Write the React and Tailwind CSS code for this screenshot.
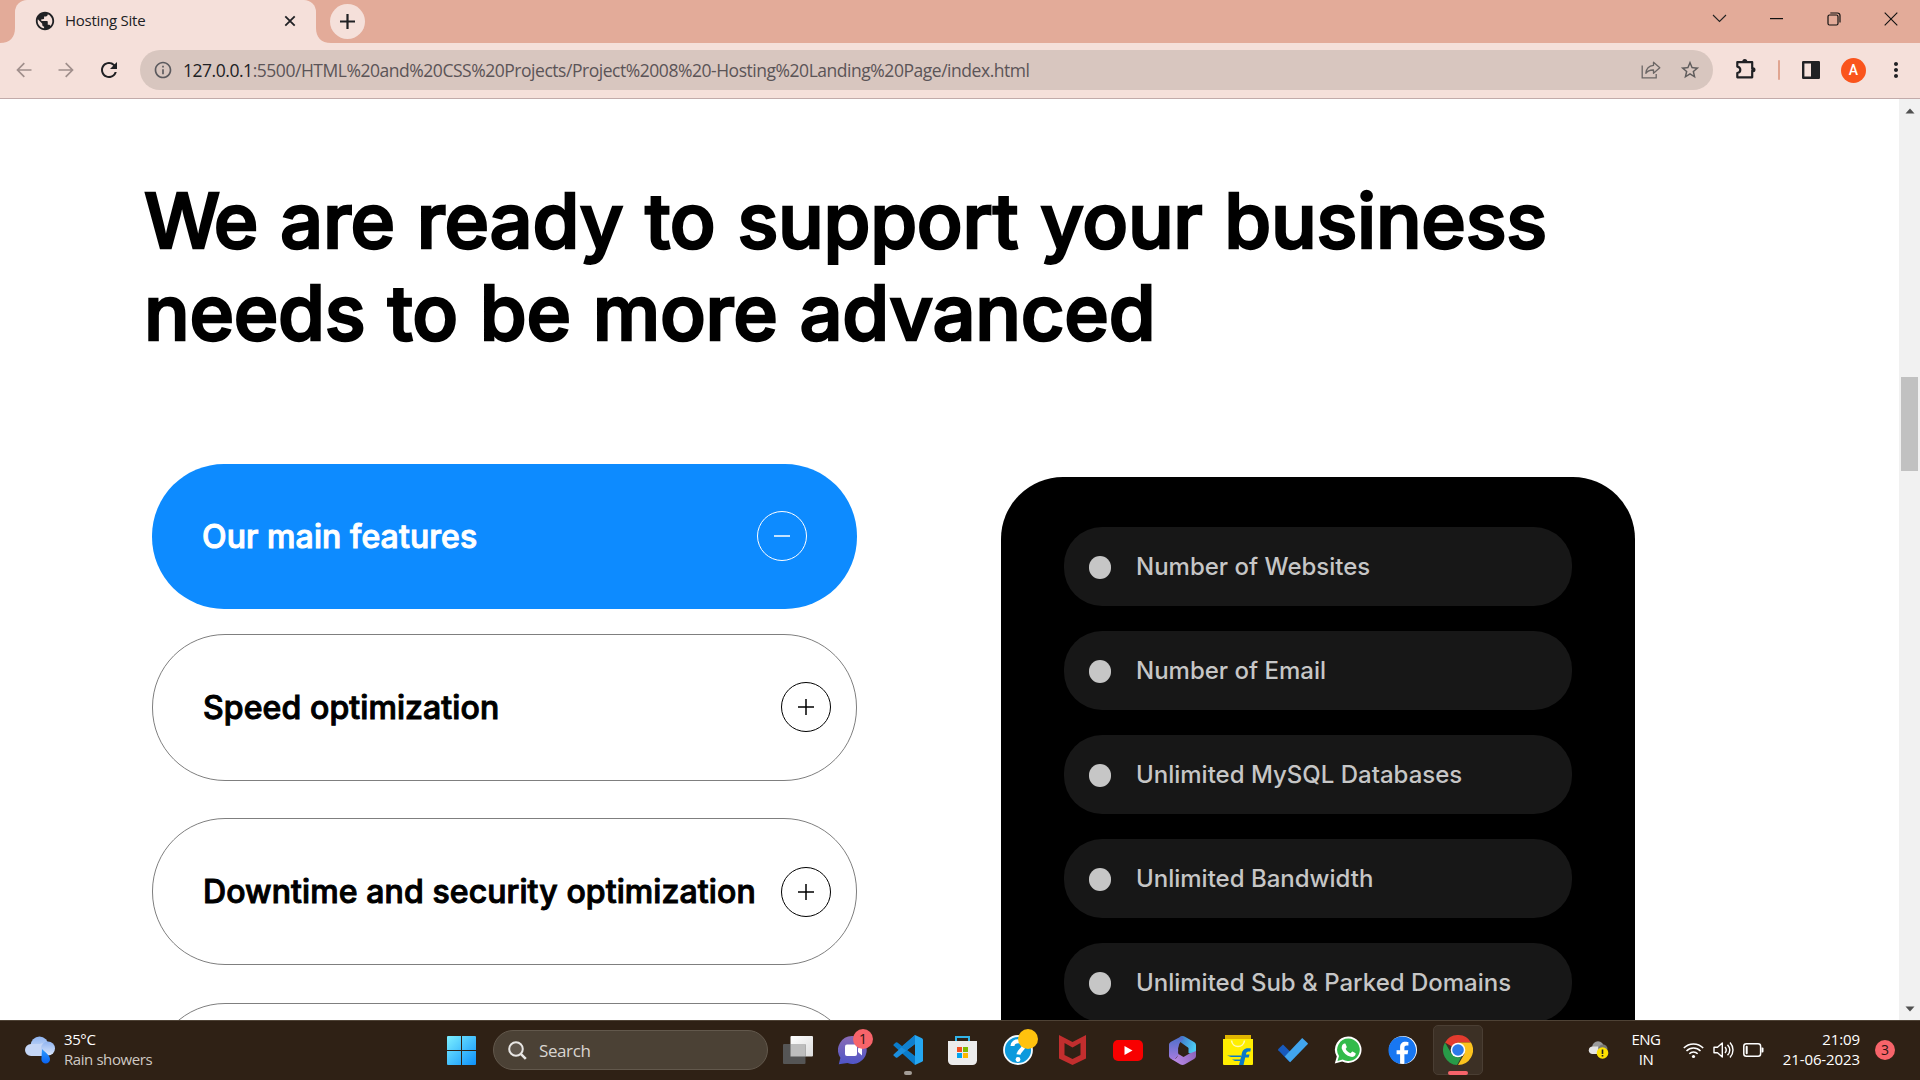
import { MdPublic, MdRefresh, MdInfoOutline, MdStarBorder, MdMoreVert } from "react-icons/md";
import { FaFacebook } from "react-icons/fa";

const ui = "font-['Open_Sans','Noto_Sans',sans-serif]";

function TabStrip() {
  return (
    <div className="flex h-[43px] items-stretch bg-[#e3ab99] pl-[15px]">
      <div className="relative flex w-[301px] items-center rounded-t-[12px] bg-[#f5e0da] pl-[19px] pr-[18px] pb-[1px]">
        <svg className="absolute -left-[15px] bottom-0" width="15" height="15"><path d="M15 0v15H0C10 15 15 9 15 0z" fill="#f5e0da" /></svg>
        <svg className="absolute -right-[15px] bottom-0" width="15" height="15"><path d="M0 0v15h15C5 15 0 9 0 0z" fill="#f5e0da" /></svg>
        <MdPublic className="size-[22px] text-[#202124]" />
        <span className="mb-[2px] ml-[9px] flex-1 text-[15px] leading-5 tracking-[-0.25px] text-[#202124]">Hosting Site</span>
        <svg width="14" height="14" viewBox="0 0 14 14" className="mr-[1px]" fill="none" stroke="#202124" strokeWidth="1.8"><path d="M2.3 2.3l9.4 9.4M11.7 2.3l-9.4 9.4" /></svg>
      </div>
      <div className="ml-[14px] mt-[4px] flex size-[35px] items-center justify-center rounded-full bg-[#f5e0da]">
        <svg width="15" height="15" viewBox="0 0 15 15" stroke="#202124" strokeWidth="2.2"><path d="M7.5 0v15M0 7.5h15" /></svg>
      </div>
      <div className="ml-auto flex pb-[6px]">
        <span className="flex w-[57px] items-center justify-center"><svg width="15" height="9" viewBox="0 0 15 9" fill="none" stroke="#222" strokeWidth="1.1"><path d="M1 1l6.500 6.500L14 1" /></svg></span>
        <span className="flex w-[57px] items-center justify-center"><svg width="13" height="2"><rect width="13" height="1.200" fill="#111" /></svg></span>
        <span className="flex w-[57px] items-center justify-center"><svg width="14" height="14" viewBox="0 0 14 14" fill="none" stroke="#111" strokeWidth="1.2"><rect x="1" y="3" width="10" height="10" rx="1.500" /><path d="M3.300 1h7.200a2.500 2.500 0 0 1 2.500 2.500v7" /></svg></span>
        <span className="flex w-[58px] items-center justify-center"><svg width="14" height="14" viewBox="0 0 14 14" stroke="#111" strokeWidth="1.1"><path d="M.7.7l12.600 12.600M13.300.7L.7 13.300" /></svg></span>
      </div>
    </div>
  );
}

function Toolbar() {
  return (
    <div className="flex h-[56px] items-center border-b border-[#c2abaa] bg-[#f5e0da] pb-[1px]">
      <div className="flex w-[140px] items-center pl-[16px]">
        <svg width="16" height="16" viewBox="0 0 16 16" fill="none" stroke="#a08f8c" strokeWidth="1.700"><path d="M15.500 8H1.500M8.300 1.200L1.500 8l6.800 6.800" /></svg>
        <svg className="ml-[26px]" width="16" height="16" viewBox="0 0 16 16" fill="none" stroke="#a08f8c" strokeWidth="1.700"><path d="M.5 8h14M7.700 1.200L14.500 8l-6.800 6.800" /></svg>
        <MdRefresh className="ml-[23px] size-[24px] text-[#202124]" />
      </div>
      <div className="flex h-[40px] w-[1573px] items-center rounded-full bg-[#d8c6bf] pl-[13px] pr-[12px]">
        <MdInfoOutline className="size-[20px] text-[#5b5a5e]" />
        <span className="mb-[1px] ml-[10px] flex-1 whitespace-nowrap text-[17.500px] leading-6 tracking-[-0.465px] text-[#5b5457]"><span className="text-[#202124]">127.0.0.1</span>:5500/HTML%20and%20CSS%20Projects/Project%2008%20-Hosting%20Landing%20Page/index.html</span>
        <svg width="20" height="18" viewBox="0 0 20 18" fill="none" stroke="#6b6665" strokeWidth="1.300"><path d="M1.200 4.500v12.300h14V13" /><path d="M12.500 1.200L18.800 6.800l-6.300 5.500V9C9 8.900 6.500 9.800 4.800 12.300 5.200 8 7.500 4.900 12.500 4.400z" strokeLinejoin="round" /></svg>
        <MdStarBorder className="ml-[18px] size-[22px] text-[#5f5c5c]" />
      </div>
      <svg className="ml-[23px] mb-[2px]" width="22" height="22" viewBox="0 0 22 22"><path d="M1.300 4.200h14.900v6.800h.8v1.500h-.8v6.800H1.300V15c1.900-.300 3-1.600 3-3.200s-1.100-2.900-3-3.200z" fill="none" stroke="#202124" strokeWidth="2.200" strokeLinejoin="round" /><path d="M6.300 3.500a2.500 2.500 0 0 1 5 0zM17 9.300a2.500 2.500 0 0 1 0 5z" fill="#202124" /></svg>
      <span className="ml-[20px] h-[20px] w-[2px] rounded-full bg-[#e0a591]" />
      <svg className="ml-[22px]" width="18" height="18" viewBox="0 0 18 18"><path d="M1.200 1.200h15.600v15.600H1.200z" fill="none" stroke="#202124" strokeWidth="2.400" strokeLinejoin="round" /><path d="M9 1h8v16H9z" fill="#202124" /></svg>
      <span className="ml-[21px] flex size-[25px] items-center justify-center rounded-full bg-[#fa541c] font-[Roboto,sans-serif] text-[14px] font-medium text-white">A</span>
      <MdMoreVert className="ml-[18px] size-[24px] text-[#202124]" />
    </div>
  );
}

function Sign({ plus }) {
  return (
    <span className="mb-[1px] flex size-[50px] shrink-0 items-center justify-center rounded-full border border-current">
      <svg width="18" height="18" viewBox="0 0 18 18" stroke="currentColor" strokeWidth="1.500"><path d={plus ? "M1 9h16M9 1v16" : "M1 9h16"} /></svg>
    </span>
  );
}

const rowText = "text-[32px] font-medium leading-10 tracking-[0.1px] whitespace-nowrap [-webkit-text-stroke:1px_currentColor]";
const outlined = "flex h-[147px] shrink-0 items-center justify-between rounded-[73px] border border-[#7f7f7f] pr-[25px] pl-[50px]";

function Accordion() {
  return (
    <div className="flex w-[705px] flex-col">
      <div className="flex h-[145px] shrink-0 items-center justify-between rounded-[72px] bg-[#0d8bff] pr-[50px] pl-[50px] text-white">
        <span className={rowText}>Our main features</span><Sign />
      </div>
      <div className={outlined + " mt-[25px]"}><span className={rowText}>Speed optimization</span><Sign plus /></div>
      <div className={outlined + " mt-[37px]"}><span className={rowText}>Downtime and security optimization</span><span className="mt-[2px]"><Sign plus /></span></div>
      <div className={outlined + " mt-[38px]"} />
    </div>
  );
}

const specs = ["Number of Websites", "Number of Email", "Unlimited MySQL Databases", "Unlimited Bandwidth", "Unlimited Sub & Parked Domains"];

function SpecCard() {
  return (
    <div className="mt-[13px] ml-[144px] flex h-[700px] w-[634px] shrink-0 flex-col gap-[25px] rounded-[62px] bg-black px-[63px] pt-[50px]">
      {specs.map((s) => (
        <div key={s} className="flex h-[79px] shrink-0 items-center rounded-[38px] bg-[#171717] pl-[25px] text-[24px] font-medium text-[#c6c6c6]">
          <span className="mt-[2px] h-[23px] w-[22px] rounded-full bg-[#c6c6c6]" />
          <span className="ml-[25px]">{s}</span>
        </div>
      ))}
    </div>
  );
}

function Scrollbar() {
  return (
    <div className="flex w-[21px] flex-col items-center bg-[#f1f1f1] pt-[9px] pb-[8px]">
      <svg width="10" height="6"><path d="M5 .5L9.500 5.500H.5z" fill="#505050" /></svg>
      <div className="mt-[263px] h-[94px] w-[17px] bg-[#c1c1c1]" />
      <svg className="mt-auto" width="10" height="6"><path d="M5 5.500L.5.500h9z" fill="#505050" /></svg>
    </div>
  );
}

function Slot({ children }) {
  return <div className="relative flex h-[50px] w-[55px] items-center justify-center">{children}</div>;
}

function Taskbar() {
  return (
    <div className="flex h-[60px] items-center border-t border-[#4e4235] bg-[#2f2115] pb-[1px] text-white">
      <div className="flex w-[434px] items-center pl-[24px]">
        <svg width="32" height="28" viewBox="0 0 32 28">
          <defs><linearGradient id="cl" x2="0" y2="1"><stop stopColor="#8fb4f0" /><stop offset="1" stopColor="#dbe6fb" /></linearGradient><linearGradient id="dr" x2="0" y2="1"><stop stopColor="#2a9bff" /><stop offset="1" stopColor="#0a63f2" /></linearGradient></defs>
          <circle cx="15.500" cy="9.500" r="9" fill="url(#cl)" /><path d="M7 8h9a6 6 0 0 1 6 12H7A6 6 0 0 1 7 8z" fill="#c5d6f6" /><circle cx="24" cy="12.500" r="7" fill="url(#cl)" />
          <path d="M18 13c4 4 8 6.500 8 10.200a4.300 4.300 0 0 1-8.600 0z" fill="url(#dr)" />
        </svg>
        <div className="mb-[3px] ml-[8px] text-[15px] leading-5">
          <div className="tracking-[-0.400px]">35°C</div>
          <div className="tracking-[-0.420px] text-[#cfc9c4]">Rain showers</div>
        </div>
      </div>
      <Slot>
        <svg width="29" height="29" viewBox="0 0 29 29"><defs><linearGradient id="wn" x2="1" y2="1"><stop stopColor="#7df0ff" /><stop offset="1" stopColor="#0d91fb" /></linearGradient></defs><path d="M0 1a1 1 0 0 1 1-1h13v14H0zM15 0h13a1 1 0 0 1 1 1v13H15zM0 15h14v14H1a1 1 0 0 1-1-1zM15 15h14v13a1 1 0 0 1-1 1H15z" fill="url(#wn)" /></svg>
      </Slot>
      <div className="ml-[4px] flex h-[40px] w-[275px] items-center rounded-full border border-[#62584c] bg-[#4b4135] pl-[14px]">
        <svg width="19" height="19" viewBox="0 0 19 19" fill="none" stroke="#e8e6e4" strokeWidth="2"><circle cx="8" cy="8" r="6.800" fill="#5f564c" /><path d="M12.800 12.800l5 5" strokeWidth="2.600" /></svg>
        <span className="mt-[1px] ml-[12px] text-[17px] leading-6 tracking-[-0.400px] text-[#d9d5d1]">Search</span>
      </div>
      <div className="ml-[2px] flex">
        <Slot>
          <svg width="30" height="28" viewBox="0 0 30 28"><defs><linearGradient id="tv" x2="1" y2="1"><stop stopColor="#fff" /><stop offset="1" stopColor="#dcdcdc" /></linearGradient></defs><rect x="7.500" width="22.500" height="20.500" rx="1" fill="url(#tv)" /><rect y="8" width="22.500" height="20" rx="1" fill="#555" /><path d="M7.500 8h15v12.500h-15z" fill="#bdbdbd" /></svg>
        </Slot>
        <Slot>
          <svg width="30" height="30" viewBox="0 0 30 30"><defs><linearGradient id="tm" x2="0" y2="1"><stop stopColor="#8a6bb5" /><stop offset="1" stopColor="#4f55c8" /></linearGradient></defs><path d="M15 1a14 14 0 1 1-5.500 27L.8 29.200l1.600-6.500A14 14 0 0 1 15 1z" fill="url(#tm)" /><rect x="7" y="9.500" width="12" height="11.500" rx="2" fill="#fff" /><path d="M20 13.500l4-3.300v10.200l-4-3.300z" fill="#fff" /></svg>
          <span className="absolute top-[4px] left-[28px] flex size-[20px] items-center justify-center rounded-full bg-[#f7646a] text-[14px] leading-none text-[#2a1512]">1</span>
        </Slot>
        <Slot>
          <svg width="30" height="30" viewBox="0 0 30 30"><path d="M22 0l7 3.200a1.800 1.800 0 0 1 1 1.600v20.400a1.800 1.800 0 0 1-1 1.600L22 30z" fill="#25a7f2" /><path d="M22 30L.8 10.800a1 1 0 0 1 0-1.500l2-1.800a1.200 1.200 0 0 1 1.600 0L22 21z" fill="#0a7ccb" /><path d="M22 0L.8 19.200a1 1 0 0 0 0 1.500l2 1.800a1.200 1.200 0 0 0 1.600 0L22 9z" fill="#1c8fdf" /><path d="M22 0v9L13 15.500 8 12z" fill="#1080cf" /></svg>
          <span className="absolute bottom-0 left-[24px] h-[4px] w-[8px] rounded-full bg-[#a39d97]" />
        </Slot>
        <Slot>
          <svg width="29" height="29" viewBox="0 0 29 29"><path d="M8 5.500V1h13v4.500" fill="none" stroke="#32b4e8" strokeWidth="2" /><path d="M0 5h29v19.500a4.500 4.500 0 0 1-4.500 4.500h-20A4.500 4.500 0 0 1 0 24.500z" fill="#ececec" /><path d="M9 11h5v5H9z" fill="#f25022" /><path d="M15 11h5v5h-5z" fill="#7fba00" /><path d="M9 17h5v5H9z" fill="#00a4ef" /><path d="M15 17h5v5h-5z" fill="#ffb900" /></svg>
        </Slot>
        <Slot>
          <svg width="30" height="30" viewBox="0 0 30 30"><circle cx="15" cy="15" r="14" fill="#0c9add" stroke="#f6fbff" strokeWidth="1.800" /><path d="M9.500 11c0-6.500 12-6 11 .5-.5 3.500-4.500 3.500-5 8" fill="none" stroke="#fff" strokeWidth="4" /><circle cx="15" cy="24.500" r="2.400" fill="#fff" /></svg>
          <span className="absolute top-[4px] left-[28px] size-[20px] rounded-full bg-[#ffc20e]" />
        </Slot>
        <Slot>
          <svg width="27" height="30" viewBox="0 0 27 30"><path d="M0 0l13.500 7L27 0v23.500L13.500 30 0 23.500zM5.500 8v12l8 4 8-4V8l-8 4.500z" fill="#c22e2e" fillRule="evenodd" /></svg>
        </Slot>
        <Slot>
          <svg width="30" height="21" viewBox="0 0 30 21"><rect width="30" height="21" rx="5" fill="#f80000" /><path d="M11.500 6l8 4.500-8 4.500z" fill="#fff" /></svg>
        </Slot>
        <Slot>
          <svg width="27" height="29" viewBox="0 0 27 29">
            <defs>
              <linearGradient id="ma" x2="1" y2=".4"><stop stopColor="#3f6fc4" /><stop offset="1" stopColor="#4ccaf3" /></linearGradient>
              <linearGradient id="mb" x2="1" y1=".3"><stop stopColor="#b98ae6" /><stop offset="1" stopColor="#8a62b8" /></linearGradient>
              <linearGradient id="mc" x2="0" y2="1"><stop stopColor="#4a6fc8" /><stop offset="1" stopColor="#a77be0" /></linearGradient>
            </defs>
            <path d="M11 .8c2-1 3.500-1 5 0L25 6c1.500.8 2 2 2 3.500V19l-7.500-2v-5L10 5z" fill="url(#ma)" />
            <path d="M12.500.2L15 3c-3 2-5 4-5.500 8v8L5 24.300l-3-1.500c-1.500-.8-2-2-2-3.300V9c0-1.500.5-2.500 2-3.300z" fill="url(#mc)" />
            <path d="M2 22.800c4 1.500 6-.5 7.500-4.800l5 3 6-3.500L27 15v4.500c0 1.500-.5 2.700-2 3.500l-9 5.200c-1.700.9-3.200.9-5 0z" fill="url(#mb)" />
            <path d="M14 9l4.800 2.700v5.600L14 20l-4.800-2.700v-5.600z" fill="#2f2115" />
          </svg>
        </Slot>
        <Slot>
          <svg width="30" height="30" viewBox="0 0 30 30"><path d="M2 0h26v5H2z" fill="#e0b400" /><path d="M0 4h30v25a1 1 0 0 1-1 1H1a1 1 0 0 1-1-1z" fill="#ffee00" /><path d="M8.500 5.500c1 8 12 8 13 0" fill="none" stroke="#fff8b0" strokeWidth="1.600" /><path d="M16 30l2.500-10c1-5.500 3-7.500 9.500-6.500l-.8 3.200c-3-.4-3.800.3-4.300 2.800h3.600l-.8 3h-3.500L20.500 30z" fill="#0878c8" /><path d="M4 20.500h14v1.500H8zM9 24.500h9V26h-6z" fill="#0878c8" /></svg>
        </Slot>
        <Slot>
          <svg width="30" height="26" viewBox="0 0 30 26"><path d="M5 7.500L.3 12a1 1 0 0 0 0 1.200L11.500 25l5.500-5.500z" fill="#185abd" /><path d="M24.200 1L29.600 6a1 1 0 0 1 0 1.300L12.200 25.200 6.700 19.500z" fill="#41a5ee" /></svg>
        </Slot>
        <Slot>
          <svg width="28" height="28" viewBox="0 0 28 28"><path d="M14.500.5a13.200 13.200 0 1 1-6.300 24.900L.8 27.500l2-7.100A13.200 13.200 0 0 1 14.500.5z" fill="#fff" /><path d="M14.500 2.500a11.300 11.300 0 1 1-5.800 21L3.500 25l1.500-5A11.300 11.300 0 0 1 14.500 2.500z" fill="#32bb4b" /><path d="M10.500 7.500c.6 0 .9 0 1.200.7l1 2.500c.3.900-1 1.600-1 2.300 1 2 2.600 3.400 4.800 4.200.8 0 1.300-1.700 2-1.600l2.700 1.300c.6.300.5.7.4 1.300-.6 2.300-2.800 3-4.700 2.600-4.500-1-7.500-4-9-7.800-.6-2 .4-5.300 2.600-5.500z" fill="#fff" /></svg>
        </Slot>
        <Slot>
          <span className="flex size-[28px] items-center justify-center rounded-full bg-white"><FaFacebook className="size-[28.500px] shrink-0 text-[#1877f2]" /></span>
        </Slot>
        <Slot>
          <span className="absolute inset-y-0 left-[3px] w-[50px] rounded-[5px] border border-[#4a3e33] bg-[#3c3025]" />
          <svg className="relative" width="30" height="30" viewBox="0 0 30 30"><path d="M15 15L2 7.500A15 15 0 0 1 28 7.500H15z" fill="#e33b2e" /><path d="M15 7.500h13A15 15 0 0 1 15 30l6.500-11.200z" fill="#fcc31e" /><path d="M2 7.500l6.500 11.200L15 22.500l3.500-.8L14 30A15 15 0 0 1 2 7.500z" fill="#289b48" /><circle cx="15" cy="15" r="7.300" fill="#fff" /><circle cx="15" cy="15" r="5.800" fill="#2b7ae9" /></svg>
          <span className="absolute bottom-0 left-[18px] h-[4px] w-[20px] rounded-full bg-[#f7646a]" />
        </Slot>
      </div>
      <div className="ml-auto flex items-center pr-[25px]">
        <svg width="21" height="18" viewBox="0 0 21 18"><circle cx="10" cy="6" r="5.800" fill="#9a9a9a" /><circle cx="15" cy="8" r="4.500" fill="#777" /><path d="M4 5.500h6V13H4a3.800 3.800 0 0 1 0-7.500z" fill="#e4e4e4" /><circle cx="14.500" cy="12" r="5.800" fill="#fde100" /><path d="M13.700 8.500h1.600v4.500h-1.600zM13.700 14h1.600v1.600h-1.600z" fill="#222" /></svg>
        <div className="mb-[2px] ml-[21px] w-[32px] text-center text-[15px] leading-5 tracking-[-0.500px]"><div>ENG</div><div>IN</div></div>
        <svg className="ml-[21px]" width="21" height="17" viewBox="0 0 21 17" fill="none" stroke="#fff" strokeWidth="1.500"><path d="M.8 6a13.500 13.500 0 0 1 19.400 0M3.500 9a9.700 9.700 0 0 1 14 0M6.300 11.800a5.900 5.900 0 0 1 8.400 0" /><circle cx="10.500" cy="14.500" r="1.600" fill="#fff" stroke="none" /></svg>
        <svg className="ml-[9px]" width="21" height="18" viewBox="0 0 21 18" fill="none" stroke="#fff" strokeWidth="1.400"><path d="M1 6.300h3.500L9.300 2v14l-4.800-4.300H1z" strokeLinejoin="round" /><path d="M12 6c1.500 1.800 1.500 4.200 0 6M14.500 3.700c2.800 3.200 2.800 7.400 0 10.600M17 1.500c4 4.500 4 10.500 0 15" /></svg>
        <svg className="ml-[9px]" width="21" height="14" viewBox="0 0 21 14"><rect x=".8" y=".8" width="16.800" height="12.400" rx="2.500" fill="none" stroke="#fff" strokeWidth="1.500" /><rect x="2.700" y="2.800" width="2" height="8.400" rx="1" fill="#fff" /><path d="M18.500 4.500h1a1 1 0 0 1 1 1v3a1 1 0 0 1-1 1h-1z" fill="#fff" /></svg>
        <div className="mb-[2px] ml-[17px] w-[79px] text-right text-[15px] leading-5 tracking-[-0.100px]"><div>21:09</div><div>21-06-2023</div></div>
        <span className="ml-[15px] flex size-[20px] items-center justify-center rounded-full bg-[#f7646a] text-[14px] leading-none text-[#2a1512]">3</span>
      </div>
    </div>
  );
}

export default function App() {
  return (
    <div className={"flex h-[1080px] w-[1920px] flex-col overflow-hidden bg-white " + ui}>
      <TabStrip />
      <Toolbar />
      <div className="flex h-[921px] font-[Inter,sans-serif] text-black">
        <main className="flex-1 overflow-hidden pt-[75px]">
          <h1 className="ml-[144px] text-[76px] leading-[92px] font-medium tracking-[-0.3px] whitespace-nowrap [-webkit-text-stroke:2.4px_currentColor] [word-spacing:2px]"><span className="tracking-[-6.5px]">W</span>e are ready to support your business<br />needs to be more advanced</h1>
          <div className="mt-[106px] ml-[152px] flex">
            <Accordion />
            <SpecCard />
          </div>
        </main>
        <Scrollbar />
      </div>
      <Taskbar />
    </div>
  );
}
